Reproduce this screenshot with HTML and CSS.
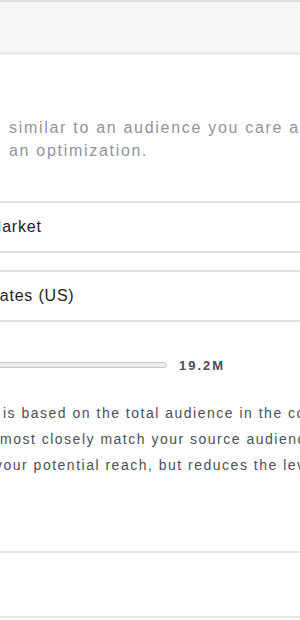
FILE: index.html
```
<!DOCTYPE html>
<html lang="en">

<head>
    <meta charset="UTF-8">
    <meta name="viewport" content="width=device-width, initial-scale=1.0">
    <title>Lookalike Audience</title>
    <link rel="stylesheet" href="styles.css">
</head>

<body>
    <div class="dialog-head"></div>

    <p class="intro">
        <span class="line">similar to an audience you care a</span>
        <span class="line">an optimization.</span>
    </p>

    <div class="fields">
        <div class="field">
            <span class="field-text source">Market</span>
        </div>
        <div class="field">
            <span class="field-text country">States (US)</span>
        </div>
    </div>

    <div class="size-row">
        <div class="track"></div>
        <span class="reach">19.2M</span>
    </div>

    <p class="note">
        <span class="line first">is based on the total audience in the co</span>
        <span class="line">most closely match your source audienc</span>
        <span class="line last">your potential reach, but reduces the lev</span>
    </p>

    <div class="divider"></div>
    <div class="dialog-foot"></div>
</body>

</html>
```

FILE: styles.css
```
body {
    margin: 0;
    width: 300px;
    height: 620px;
    overflow: hidden;
    background-color: white;
    font-family: "Liberation Sans", Arial, sans-serif;
}

.dialog-head {
    height: 50px;
    background-color: #f5f6f7;
    border-top: 2px solid #dddfe2;
    border-bottom: 3px solid #e9ebee;
}

.line {
    display: block;
    white-space: nowrap;
}

.intro {
    margin: 61px 0 0 0;
    padding-left: 9px;
    font-size: 16px;
    line-height: 23px;
    letter-spacing: 1.7px;
    color: #90949c;
}

.fields {
    display: flex;
    flex-direction: column;
    gap: 17px;
    margin-top: 39px;
}

.field {
    height: 48px;
    display: flex;
    align-items: center;
    border-top: 2px solid #dde0e6;
    border-bottom: 2px solid #dde0e6;
    white-space: nowrap;
}

.field-text {
    font-size: 16px;
    letter-spacing: 0.8px;
    color: #1d2129;
}

.source {
    margin-left: -12px;
}

.country {
    margin-left: -17px;
}

.size-row {
    display: flex;
    align-items: center;
    gap: 12px;
    height: 20px;
    margin-top: 33px;
}

.track {
    width: 180px;
    height: 4px;
    margin-left: -15px;
    background-color: #ebedf0;
    border: 1px solid #c4c7cc;
    border-radius: 3px;
}

.reach {
    font-size: 13px;
    font-weight: bold;
    letter-spacing: 2px;
    color: #4b4f56;
}

.note {
    margin: 25px 0 0 0;
    font-size: 14px;
    line-height: 26px;
    letter-spacing: 1.5px;
    color: #4b4f56;
}

.note .first {
    padding-left: 3px;
}

.note .last {
    margin-left: -5px;
}

.divider {
    margin-top: 73px;
    border-top: 2px solid #e5e6e9;
}

.dialog-foot {
    height: 63px;
    border-bottom: 2px solid #e5e6e9;
}
```
